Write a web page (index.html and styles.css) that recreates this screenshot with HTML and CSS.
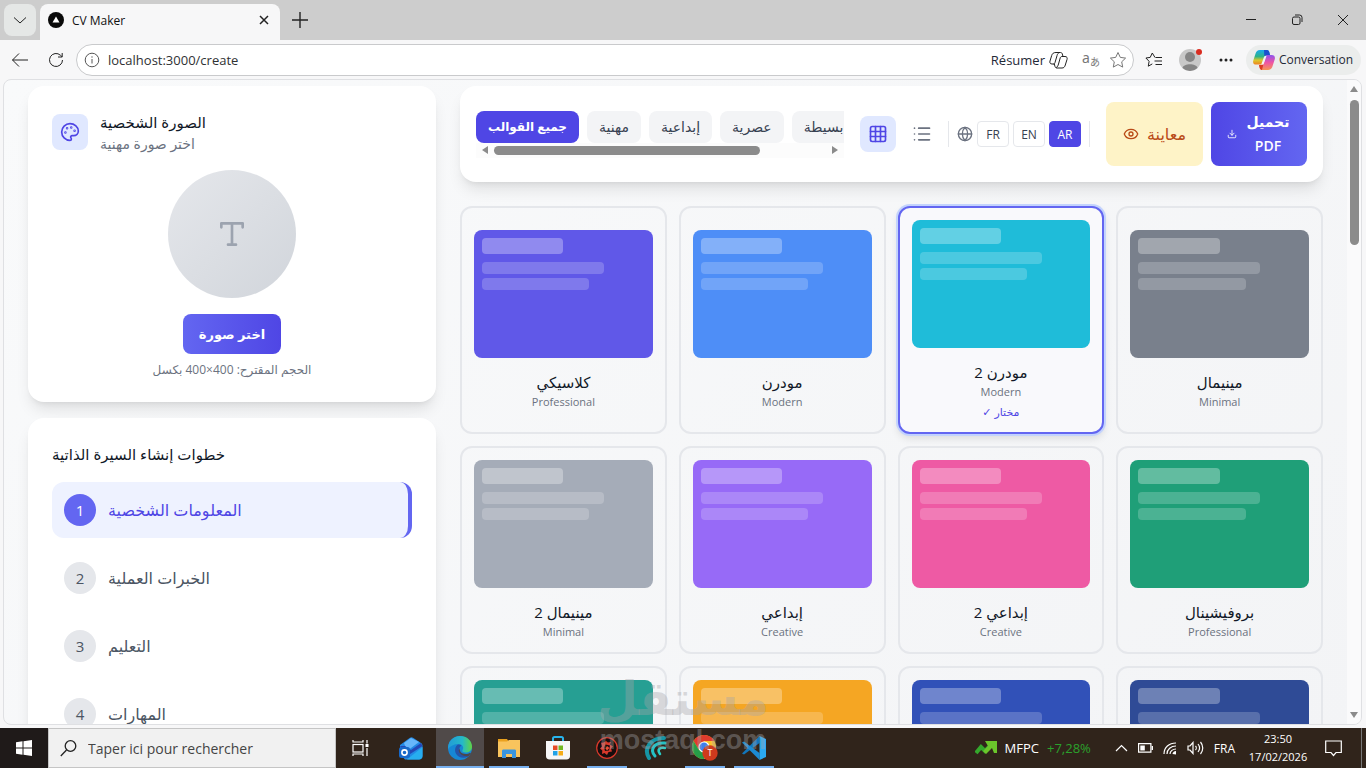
FILE: index.html
```html
<!DOCTYPE html>
<html lang="fr">
<head>
<meta charset="utf-8">
<title>CV Maker</title>
<meta name="viewport" content="width=device-width, initial-scale=1">
<link rel="stylesheet" href="styles.css">
</head>
<body>
<header class="tabstrip">
  <button class="tab-search" aria-label="Onglets"><svg width="14" height="14" viewBox="0 0 14 14"><path d="M1 4.500l6 5.500 6-5.500"/></svg></button>
  <div class="tab">
    <svg class="favicon" width="16" height="16" viewBox="0 0 16 16"><circle cx="8" cy="8" r="8"/><path d="M8 4.500l3.500 6h-7z"/></svg>
    <span class="tab-title">CV Maker</span>
    <button class="plain" aria-label="Fermer l'onglet"><svg width="10" height="10" viewBox="0 0 10 10"><path d="M1 1l8 8M9 1l-8 8" stroke-width="1.500"/></svg></button>
  </div>
  <button class="plain new-tab" aria-label="Nouvel onglet"><svg width="16" height="16" viewBox="0 0 16 16"><path d="M8 0v16M0 8h16" stroke-width="1.400"/></svg></button>
  <div class="window-controls">
    <button class="plain" aria-label="Réduire"><svg width="12" height="12" viewBox="0 0 12 12"><path d="M1 5.500h10"/></svg></button>
    <button class="plain" aria-label="Restaurer"><svg width="12" height="12" viewBox="0 0 12 12"><rect x="1.500" y="3" width="7.500" height="7.500" rx="1.500"/><path d="M4 1h4.500a2.500 2.500 0 0 1 2.500 2.500V8"/></svg></button>
    <button class="plain" aria-label="Fermer"><svg width="12" height="12" viewBox="0 0 12 12"><path d="M1 1l10 10M11 1L1 11"/></svg></button>
  </div>
</header>

<nav class="toolbar">
  <button class="plain nav-btn" aria-label="Retour"><svg width="18" height="16" viewBox="0 0 18 16"><path d="M17 8H1.500M8 1.500L1.500 8 8 14.500"/></svg></button>
  <button class="plain nav-btn" aria-label="Actualiser"><svg width="16" height="16" viewBox="0 0 16 16"><path d="M14.500 8a6.500 6.500 0 1 1-2-4.700L14 4.700M14.200 1v4H10"/></svg></button>
  <div class="address">
    <svg class="info" width="16" height="16" viewBox="0 0 16 16"><circle cx="8" cy="8" r="6.800"/><path d="M8 7v4.500M8 4.300v1.400"/></svg>
    <input class="url" type="text" value="localhost:3000/create" aria-label="Adresse">
    <button class="plain summary">Résumer
      <svg width="19" height="18" viewBox="0 0 19 18"><path d="M7 1.500h4.500c1 0 1.500.5 1.800 1.500l.7 2.500H16c2 0 2.500 1.300 2 3l-1.700 5.500c-.6 2-1.500 3-3.300 3H8c-1.200 0-1.700-.6-2-1.500L5.300 13H3c-2 0-2.500-1.500-2-3L2.700 4.500c.6-2 1.800-3 4.300-3zM10.500 1.600C9 2 8.500 3 8.100 4.400L6 11.500c-.3 1-.5 1.500-1.500 1.500M14 5.500h-1c-1 0-1.500.6-1.800 1.500L9.500 13c-.4 1.600-1 2.800-2.300 3.600"/></svg>
    </button>
    <button class="plain translate" aria-label="Traduire"><span class="tr-a">a</span><span class="tr-b">あ</span></button>
    <button class="plain star" aria-label="Favori"><svg width="18" height="18" viewBox="0 0 18 18"><path d="M9 1.500l2.300 4.900 5.300.7-3.900 3.700 1 5.300L9 13.500l-4.700 2.600 1-5.300L1.400 7.100l5.300-.7z"/></svg></button>
  </div>
  <button class="plain fav-list" aria-label="Favoris"><svg width="18" height="16" viewBox="0 0 18 16"><path d="M10 5.500L7.300 1 5.200 5.400.9 6l3.200 3.300-.8 4.900 4-2.300M10.500 5.500h6.500M9.500 9h7.500M10.500 12.500h6.500"/></svg></button>
  <button class="plain profile" aria-label="Profil"><svg width="22" height="22" viewBox="0 0 22 22"><circle cx="11" cy="11" r="11" fill="#c8c8c8"/><circle cx="11" cy="8" r="5" fill="#858585"/><path d="M3.500 19c1-5 14-5 15 0a11 11 0 0 1-15 0z" fill="#858585"/></svg><span class="dot"></span></button>
  <button class="plain more" aria-label="Plus"><svg width="14" height="4" viewBox="0 0 14 4"><circle cx="2" cy="2" r="1.500"/><circle cx="7" cy="2" r="1.500"/><circle cx="12" cy="2" r="1.500"/></svg></button>
  <button class="conversation">
    <svg width="22" height="20" viewBox="0 0 22 20">
      <defs>
        <linearGradient id="cpA" x1="0" y1="0" x2="0" y2="1"><stop offset="0" stop-color="#18a9ee"/><stop offset=".45" stop-color="#2eb388"/><stop offset=".7" stop-color="#d9c92c"/><stop offset="1" stop-color="#ef8220"/></linearGradient>
        <linearGradient id="cpB" x1="0" y1="0" x2="0" y2="1"><stop offset="0" stop-color="#8d55ee"/><stop offset=".5" stop-color="#ee54a4"/><stop offset="1" stop-color="#f79554"/></linearGradient>
      </defs>
      <path d="M7 0h7c1.500 0 2 1 2.400 2.500L17 5h-2c-2 0-2.600 1-3.100 3L10 14.500H3.500C.5 14.500-.4 13 .3 10.500L2.400 4C3.200 1.200 4.500 0 7 0z" fill="url(#cpA)"/>
      <path d="M11 0h3c1.500 0 2 1 2.400 2.500L17 5h-3c-1.300 0-2.200.6-2.600 2z" fill="#1a50ce"/>
      <path d="M15 20H9c-1.500 0-2-1-2.400-2.500L6 15h2c2 0 2.600-1 3.100-3L13 5h5.500c3 0 3.900 2 3.200 4.500L19.600 16c-.8 2.800-2.100 4-4.600 4z" fill="url(#cpB)"/>
      <path d="M6 15h2c1.400 0 2.100-.5 2.600-1.500L9 20c-1.500 0-2-1-2.400-2.500z" fill="#db3b24"/>
      <path d="M13.500 6l-3 8.500H8.200L11 7c.4-1 1-1.300 2.500-1z" fill="#f4f4f6"/>
    </svg>
    Conversation
  </button>
</nav>

<div class="viewport">
  <main class="page">
    <aside class="sidebar">
      <section class="card photo-card">
        <div class="photo-head">
          <span class="badge"><svg class="lucide" width="20" height="20" viewBox="0 0 24 24"><circle cx="13.500" cy="6.500" r=".5"/><circle cx="17.500" cy="10.500" r=".5"/><circle cx="8.500" cy="7.500" r=".5"/><circle cx="6.500" cy="12.500" r=".5"/><path d="M12 2C6.500 2 2 6.500 2 12s4.500 10 10 10c.926 0 1.648-.746 1.648-1.688 0-.437-.18-.835-.437-1.125-.29-.289-.438-.652-.438-1.125a1.640 1.640 0 0 1 1.668-1.668h1.996c3.051 0 5.555-2.503 5.555-5.554C21.965 6.012 17.461 2 12 2z"/></svg></span>
          <div>
            <h2 class="heading" lang="ar">الصورة الشخصية</h2>
            <p class="sub" lang="ar">اختر صورة مهنية</p>
          </div>
        </div>
        <div class="avatar"><svg class="lucide" width="32" height="32" viewBox="0 0 24 24"><path d="M4 7V4h16v3M9 20h6M12 4v16"/></svg></div>
        <button class="choose" lang="ar">اختر صورة</button>
        <p class="hint" lang="ar" dir="rtl">الحجم المقترح: 400×400 بكسل</p>
      </section>
      <section class="card steps-card">
        <h2 class="heading" lang="ar">خطوات إنشاء السيرة الذاتية</h2>
        <ol class="steps">
          <li><button class="step active"><span class="num">1</span><span lang="ar">المعلومات الشخصية</span></button></li>
          <li><button class="step"><span class="num">2</span><span lang="ar">الخبرات العملية</span></button></li>
          <li><button class="step"><span class="num">3</span><span lang="ar">التعليم</span></button></li>
          <li><button class="step"><span class="num">4</span><span lang="ar">المهارات</span></button></li>
        </ol>
      </section>
    </aside>

    <div class="content">
      <section class="card controls">
        <div class="filters">
          <div class="chips" lang="ar">
            <button class="chip on">جميع القوالب</button>
            <button class="chip">مهنية</button>
            <button class="chip">إبداعية</button>
            <button class="chip">عصرية</button>
            <button class="chip">بسيطة</button>
          </div>
          <div class="hscroll"><i class="arrow left"></i><div class="htrack"><div class="hthumb"></div></div><i class="arrow right"></i></div>
        </div>
        <div class="views">
          <button class="view on" aria-label="Grille"><svg class="lucide" width="20" height="20" viewBox="0 0 24 24"><rect x="3" y="3" width="18" height="18" rx="2"/><path d="M3 9h18M3 15h18M9 3v18M15 3v18"/></svg></button>
          <button class="view" aria-label="Liste"><svg class="lucide" width="20" height="20" viewBox="0 0 24 24"><path d="M8 5h13M8 12h13M8 19h13M3 5h.01M3 12h.01M3 19h.01"/></svg></button>
        </div>
        <div class="langs">
          <svg class="lucide" width="16" height="16" viewBox="0 0 24 24"><circle cx="12" cy="12" r="10"/><path d="M12 2a14.500 14.500 0 0 0 0 20 14.500 14.500 0 0 0 0-20M2 12h20"/></svg>
          <button class="lang">FR</button><button class="lang">EN</button><button class="lang on">AR</button>
        </div>
        <div class="actions">
          <button class="action preview"><svg class="lucide" width="16" height="16" viewBox="0 0 24 24"><path d="M2.060 12.350a1 1 0 0 1 0-.7 10.750 10.750 0 0 1 19.880 0 1 1 0 0 1 0 .7 10.750 10.750 0 0 1-19.880 0"/><circle cx="12" cy="12" r="3"/></svg><span lang="ar">معاينة</span></button>
          <button class="action download"><svg class="lucide" width="10" height="10" viewBox="0 0 24 24"><path d="M21 15v4a2 2 0 0 1-2 2H5a2 2 0 0 1-2-2v-4M7 10l5 5 5-5M12 15V3"/></svg><span lang="ar">تحميل PDF</span></button>
        </div>
      </section>

      <section class="templates">
        <button class="tpl"><span class="thumb indigo"><i></i><i></i><i></i></span><span class="name" lang="ar">كلاسيكي</span><span class="kind">Professional</span></button>
        <button class="tpl"><span class="thumb blue"><i></i><i></i><i></i></span><span class="name" lang="ar">مودرن</span><span class="kind">Modern</span></button>
        <button class="tpl selected"><span class="thumb cyan"><i></i><i></i><i></i></span><span class="name" dir="rtl" lang="ar">مودرن 2</span><span class="kind">Modern</span><span class="picked" lang="ar">✓ مختار</span></button>
        <button class="tpl"><span class="thumb slate"><i></i><i></i><i></i></span><span class="name" lang="ar">مينيمال</span><span class="kind">Minimal</span></button>
        <button class="tpl"><span class="thumb gray"><i></i><i></i><i></i></span><span class="name" dir="rtl" lang="ar">مينيمال 2</span><span class="kind">Minimal</span></button>
        <button class="tpl"><span class="thumb violet"><i></i><i></i><i></i></span><span class="name" lang="ar">إبداعي</span><span class="kind">Creative</span></button>
        <button class="tpl"><span class="thumb pink"><i></i><i></i><i></i></span><span class="name" dir="rtl" lang="ar">إبداعي 2</span><span class="kind">Creative</span></button>
        <button class="tpl"><span class="thumb green"><i></i><i></i><i></i></span><span class="name" lang="ar">بروفيشينال</span><span class="kind">Professional</span></button>
        <button class="tpl" aria-label="Professional"><span class="thumb teal"><i></i><i></i><i></i></span></button>
        <button class="tpl" aria-label="Creative"><span class="thumb amber"><i></i><i></i><i></i></span></button>
        <button class="tpl" aria-label="Modern"><span class="thumb royal"><i></i><i></i><i></i></span></button>
        <button class="tpl" aria-label="Minimal"><span class="thumb navy"><i></i><i></i><i></i></span></button>
      </section>
    </div>
  </main>
  <div class="vscroll"><i class="arrow up"></i><div class="vtrack"><div class="vthumb"></div></div><i class="arrow down"></i></div>
</div>

<footer class="taskbar">
  <button class="start" aria-label="Démarrer"><svg width="16" height="16" viewBox="0 0 16 16"><path d="M0 2.200L6.500 1.300v6.200H0zM7.500 1.200L16 0v7.500H7.500zM0 8.500h6.500v6.200L0 13.800zM7.500 8.500H16V16l-8.500-1.200z"/></svg></button>
  <label class="search">
    <svg width="17" height="17" viewBox="0 0 17 17"><circle cx="10.500" cy="6" r="5.300"/><path d="M6.500 10L.8 16"/></svg>
    <input type="text" placeholder="Taper ici pour rechercher" aria-label="Rechercher">
  </label>
  <div class="apps">
    <button class="app task-view" aria-label="Vue des tâches"><svg width="17" height="16" viewBox="0 0 17 16" fill="none" stroke="#fff" stroke-width="1.200"><rect x="1" y="4.500" width="10" height="7.500"/><path d="M1 0v2h10V0M1 16v-2h10v2M15 0v3.500M15 8v8"/><path d="M13.500 4h3v3h-3z" fill="#fff" stroke="none"/></svg></button>
    <button class="app" aria-label="Outlook"><svg width="24" height="23" viewBox="0 0 24 23"><path d="M1 8L11 .8c1-.7 2-.7 3 0L22 6c1 .7 1.500 1.500 1.500 3v10c0 2-1.500 3.500-3.500 3.500H6L1 17z" fill="#2289e5"/><path d="M5 6l7-5 8 4-12 9z" fill="#67b7fb"/><path d="M1 9h5l6 4 10-7 1.500 3L8 19z" fill="#2547b6"/><path d="M23.500 10v9c0 2-1.500 3.500-3.500 3.500H8z" fill="#27adf0"/><rect y="10" width="11" height="11" rx="2.500" fill="#1769ca"/><circle cx="5.500" cy="15.500" r="2.600" fill="none" stroke="#fff" stroke-width="1.600"/></svg></button>
    <button class="app current" aria-label="Edge"><svg width="24" height="24" viewBox="0 0 24 24"><defs><linearGradient id="edA" x2="1"><stop stop-color="#229bd7"/><stop offset=".6" stop-color="#25b9c8"/><stop offset="1" stop-color="#61d442"/></linearGradient></defs><circle cx="12" cy="12" r="12" fill="#1687d5"/><path d="M0 11C1 4 6 0 12 0c7 0 12 5 12 10.500 0 4-3 6-6.500 6-2.500 0-4-1-3-2.500 2-3-.5-6-4-6C6 8 2 10 0 13z" fill="url(#edA)"/><path d="M10 8.500c-3 2-3.800 6-1.800 9.500 2 3.400 7 5 12 2.500l2.200-2.500c-5 2.600-10 .5-11-3-.7-2.500.4-4.500 2-5.500-1-1-2.200-1.300-3.400-1z" fill="#2454aa"/><path d="M12 12c-1 3 1.500 6 5.500 6 2 0 3.500-.5 4.700-1.300l.8.600-2.300 2.600C16 21 11 18 10.700 14.500z" fill="#4c474b"/></svg></button>
    <button class="app open" aria-label="Explorateur"><svg width="22" height="19" viewBox="0 0 22 19"><path d="M0 0h9l2 3H0z" fill="#eaa11e"/><path d="M0 2.500h9L11 1h11v17H0z" fill="#f9c45d"/><path d="M4 19v-7c0-1 .6-1.500 1.500-1.500h11c1 0 1.500.5 1.500 1.500v7h-4v-4H8v4z" fill="#3995df"/></svg></button>
    <button class="app" aria-label="Microsoft Store"><svg width="24" height="24" viewBox="0 0 24 24"><path d="M7 6V2.500C7 1.500 7.500 1 8.500 1h7c1 0 1.500.5 1.500 1.500V6" fill="none" stroke="#28b4ec" stroke-width="2"/><path d="M0 5h24v15c0 2-1.200 3.500-3.500 3.500h-17C1.200 23.500 0 22 0 20z" fill="#f7f7f7"/><path d="M7 9.500h4.500V14H7z" fill="#e64b26"/><path d="M12.500 9.500H17V14h-4.500z" fill="#72b923"/><path d="M7 15h4.500v4.500H7z" fill="#22a3e7"/><path d="M12.500 15H17v4.500h-4.500z" fill="#f6ad18"/></svg></button>
    <button class="app open" aria-label="Studio"><svg width="22" height="22" viewBox="0 0 22 22"><circle cx="11" cy="11" r="10.300" fill="#170d0d" stroke="#d9392b" stroke-width="1.200"/><path d="M5 5.500c2 .5 3 0 5-1.500l2 1.500 3-.5-1 2.500 3 2-2 2 1 3-3.500.5-1.500 3-2.500-2L6 17l.3-3.500L4 11.500l2-2z" fill="#d9392b"/><path d="M9.500 7.500l4.500 1-1 5-4 .5-1-3.500z" fill="#170d0d"/><path d="M11 9l2.500 2-2.500 2.500-1.500-2z" fill="#e84f34"/></svg></button>
    <button class="app" aria-label="Agent"><svg width="24" height="24" viewBox="0 0 24 24" fill="none" stroke-linecap="round"><path d="M5 22C-1 12 7 2 20 2" stroke="#1695a5" stroke-width="4"/><path d="M11 20C5 13 11 6 21 7" stroke="#24c1c5" stroke-width="3"/><path d="M16 18c-3-4-1-7 5-6" stroke="#29cec8" stroke-width="2.500"/></svg></button>
    <button class="app open" aria-label="Chrome"><svg width="26" height="26" viewBox="0 0 26 26"><circle cx="12" cy="12" r="12" fill="#fbc226"/><path d="M1.600 6A12 12 0 0 1 22.400 6H12l-5 9z" fill="#df3b2d"/><path d="M1.600 6A12 12 0 0 0 12 24l5-9H7z" fill="#269d48"/><circle cx="12" cy="12" r="5.600" fill="#fff"/><circle cx="12" cy="12" r="4.400" fill="#3e80ed"/><circle cx="18" cy="18" r="7.700" fill="#ce3a1d"/><text x="18" y="21" text-anchor="middle" class="chrome-t">T</text></svg></button>
    <button class="app open" aria-label="Visual Studio Code"><svg width="24" height="24" viewBox="0 0 24 24"><path d="M17.500 0v7L2 18.500l-2-1z" fill="#1276bb"/><path d="M0 6.500l2-1L17.500 17v7z" fill="#1c8bd4"/><path d="M17.500 0L24 3v18l-6.500 3z" fill="#2baaf2"/></svg></button>
  </div>
  <div class="tray">
    <div class="stock"><svg width="22" height="14" viewBox="0 0 22 14"><path d="M1 12l5-6 4 4 7-7" fill="none" stroke="#34a82c" stroke-width="4"/><path d="M10 0h12v12h-3l-2-5-6 6-3-3 5-5z" fill="#6bc62b"/></svg><span>MFPC</span><span class="gain">+7,28%</span></div>
    <svg width="13" height="8" viewBox="0 0 13 8"><path d="M1 7l5.500-5.500L12 7"/></svg>
    <svg width="15" height="10" viewBox="0 0 15 10"><path d="M.6.600h12.300v8.600H.6zM14.400 3v4"/><path d="M2.300 2.500h4.500v5H2.300z" fill="#fff" stroke="none"/></svg>
    <svg width="14" height="13" viewBox="0 0 14 13"><path d="M1 12C1 5.500 6 1 13 1M4 12c0-4.500 4-8 9-8M7 12c0-3 3-5 6-5"/><path d="M9.500 12c0-1.500 1.500-3 3.500-3v3.500z" fill="#fff" stroke="none"/></svg>
    <svg width="17" height="14" viewBox="0 0 17 14"><path d="M1 5h2l3-3.500v11L3 9H1zM8.500 5c1 1 1 3 0 4M11 3c2 2.500 2 5.500 0 8M13.500 1c3 3.500 3 8.500 0 12"/></svg>
    <span class="lang-code">FRA</span>
    <div class="clock"><span>23:50</span><span>17/02/2026</span></div>
    <svg class="bell" width="17" height="17" viewBox="0 0 17 17"><path d="M.7 1h15.600v11.500H11l-2.500 3-2.500-3H.7z"/></svg>
    <span class="peek"></span>
  </div>
</footer>
<div class="watermark" aria-hidden="true"><span class="wm-ar" lang="ar">مستقل</span><span class="wm-en">mostaql.com</span></div>
</body>
</html>
```
FILE: styles.css
```css
* { box-sizing: border-box; }

body {
  margin: 0;
  height: 100vh;
  display: flex;
  flex-direction: column;
  overflow: hidden;
  background: #f7f7f8;
  color: #1f2937;
  font-family: "Open Sans", "Noto Sans", "DejaVu Sans", sans-serif;
  font-size: 16px;
}

button, input { font: inherit; color: inherit; }
button { padding: 0; border: 0; background: none; }
h2, p, ol { margin: 0; padding: 0; list-style: none; }
svg { flex: none; display: block; }

/* Browser window */
.tabstrip {
  flex: none;
  height: 40px;
  display: flex;
  align-items: center;
  background: #cdcdcd;
}
.plain { display: flex; align-items: center; justify-content: center; }
.plain svg, .tab-search svg { fill: none; stroke: #222; }
.tab-search {
  width: 32px;
  height: 32px;
  margin: 0 4px;
  display: flex;
  align-items: center;
  justify-content: center;
  border-radius: 8px;
  background: #e5e7e6;
}
.tab {
  align-self: flex-end;
  width: 240px;
  height: 36px;
  padding: 0 11px 4px 8px;
  display: flex;
  align-items: center;
  gap: 8px;
  border-radius: 8px 8px 0 0;
  background: #f7f7f8;
}
.tab-title { flex: 1; font-size: 12px; color: #111; }
.favicon circle { fill: #0a0a0a; }
.favicon path { fill: #fff; }
.new-tab { width: 40px; height: 32px; }
.window-controls { margin-left: auto; display: flex; }
.window-controls .plain { width: 46px; height: 40px; }

.toolbar {
  flex: none;
  height: 39px;
  display: flex;
  align-items: center;
  padding-right: 5px;
}
.nav-btn { width: 36px; height: 32px; margin-left: 2px; }
.nav-btn + .nav-btn { margin-left: 0; }
.address {
  flex: 1;
  height: 32px;
  margin-left: 2px;
  padding: 0 6px 0 7px;
  display: flex;
  align-items: center;
  gap: 8px;
  border: 1px solid #c9cacc;
  border-radius: 16px;
  background: #fff;
}
.info { fill: none; stroke: #555; }
.url {
  flex: 1;
  min-width: 0;
  border: 0;
  padding: 0;
  background: none;
  outline: 0;
  font-size: 13px;
  color: #2f3133;
}
.summary { gap: 4px; font-size: 13px; }
.translate { width: 20px; margin-left: 5px; color: #777; font-family: "Noto Sans", "Noto Sans CJK JP", sans-serif; }
.tr-a { font-size: 14px; line-height: 20px; padding-bottom: 4px; }
.tr-b { font-size: 10px; line-height: 20px; padding-top: 4px; }
.star svg { stroke: #777; }
.fav-list { width: 40px; height: 32px; }
.profile { position: relative; width: 32px; height: 32px; }
.profile svg { stroke: none; }
.dot {
  position: absolute;
  top: 5px;
  right: 4px;
  width: 6px;
  height: 6px;
  border-radius: 50%;
  background: #d92c20;
}
.more { width: 40px; height: 32px; }
.more svg { fill: #222; stroke: none; }
.conversation {
  height: 30px;
  padding: 0 8px 0 7px;
  display: flex;
  align-items: center;
  gap: 4px;
  border-radius: 15px;
  background: #ebedec;
  font-size: 12px;
}

.viewport {
  flex: 1;
  min-height: 0;
  margin: 0 4px 3px 3px;
  display: flex;
  overflow: hidden;
  border: 1px solid #dfe0e3;
  border-radius: 8px;
  background: linear-gradient(135deg, #f9fafb, #f3f4f6);
}

/* Application */
.page {
  flex: 1;
  min-width: 0;
  padding: 6px 24px 0;
  display: grid;
  grid-template-columns: 408fr 863fr;
  align-items: start;
  gap: 24px;
}
.card {
  border-radius: 16px;
  background: #fff;
  box-shadow: 0 10px 15px -3px rgba(0, 0, 0, .1), 0 4px 6px -4px rgba(0, 0, 0, .1);
}
.lucide {
  fill: none;
  stroke: currentColor;
  stroke-width: 2;
  stroke-linecap: round;
  stroke-linejoin: round;
}
.sidebar { display: flex; flex-direction: column; gap: 16px; }
.photo-card {
  padding: 24px;
  display: flex;
  flex-direction: column;
  align-items: center;
}
.photo-head { align-self: stretch; display: flex; align-items: center; gap: 12px; margin-bottom: 16px; }
.badge {
  padding: 8px;
  border-radius: 8px;
  background: #e0e8ff;
  color: #4f46e5;
}
.heading { font-size: 15px; line-height: 24px; font-weight: 500; color: #111827; }
.sub { font-size: 14px; line-height: 20px; color: #6b7280; }
.avatar {
  width: 128px;
  height: 128px;
  display: flex;
  align-items: center;
  justify-content: center;
  border-radius: 50%;
  background: linear-gradient(135deg, #e5e7eb, #d1d5db);
  color: #9ca3af;
}
.choose {
  height: 40px;
  margin: 16px 0 8px;
  padding: 0 16px;
  border-radius: 8px;
  background: linear-gradient(90deg, #6366f1, #4f46e5);
  color: #fff;
  font-weight: 600;
  font-size: 13px;
}
.hint { font-size: 12px; line-height: 16px; color: #6b7280; }
.steps-card { padding: 24px; }
.steps { margin-top: 16px; display: flex; flex-direction: column; gap: 12px; }
.step {
  width: 100%;
  height: 56px;
  padding: 0 12px;
  display: flex;
  align-items: center;
  gap: 12px;
  border-radius: 12px;
  color: #4b5563;
}
.num {
  width: 32px;
  height: 32px;
  display: flex;
  align-items: center;
  justify-content: center;
  border-radius: 50%;
  background: #e5e7eb;
  font-size: 15px;
}
.step.active { background: #eef2ff; color: #4f46e5; border-right: 4px solid #6366f1; }
.step.active .num { background: #6366f1; color: #fff; }

.content { min-width: 0; display: flex; flex-direction: column; gap: 24px; }
.controls {
  height: 96px;
  padding: 16px;
  display: flex;
  align-items: center;
}
.filters { flex: 1; min-width: 0; }
.chips { display: flex; gap: 8px; overflow: hidden; }
.chip {
  flex: none;
  height: 32px;
  padding: 0 12px;
  border-radius: 8px;
  background: #f3f4f6;
  color: #374151;
  font-size: 14px;
  white-space: nowrap;
}
.chip.on { background: #4f46e5; color: #fff; font-weight: 600; font-size: 12px; }
.hscroll {
  height: 15px;
  padding: 0 6px;
  display: flex;
  align-items: center;
  gap: 6px;
  background: #fcfcfc;
}
.htrack { flex: 1; }
.hthumb { width: 80%; height: 9px; border-radius: 5px; background: #8b8b8b; }
.arrow { width: 0; height: 0; border: 4px solid transparent; }
.arrow.left { border-left-width: 0; border-right: 6px solid #8b8b8b; }
.arrow.right { border-right-width: 0; border-left: 6px solid #8b8b8b; }
.arrow.up { border-top-width: 0; border-bottom: 6px solid #8b8b8b; }
.arrow.down { border-bottom-width: 0; border-top: 6px solid #8b8b8b; }
.views { display: flex; gap: 8px; margin: 0 8px 0 16px; }
.view { padding: 8px; border-radius: 8px; color: #6b7280; }
.view.on { background: #e0e8ff; color: #4f46e5; }
.langs {
  height: 26px;
  padding: 0 8px;
  display: flex;
  align-items: center;
  gap: 4px;
  border: solid #e5e7eb;
  border-width: 0 1px;
  color: #6b7280;
}
.lang {
  width: 32px;
  height: 26px;
  border: 1px solid #e5e7eb;
  border-radius: 4px;
  color: #374151;
  font-size: 12px;
}
.lang.on { background: #4f46e5; border-color: #4f46e5; color: #fff; }
.actions { display: flex; gap: 8px; margin-left: 16px; }
.action {
  width: 97px;
  height: 64px;
  display: flex;
  align-items: center;
  justify-content: center;
  gap: 8px;
  border-radius: 8px;
  line-height: 24px;
}
.preview { background: #fef3c7; color: #b94a16; }
.download {
  width: 96px;
  padding: 0 16px;
  background: linear-gradient(90deg, #4f46e5, #6366f1);
  color: #fff;
  font-size: 14px;
  font-weight: 600;
}

.templates { display: grid; grid-template-columns: repeat(4, 1fr); gap: 12px; }
.tpl {
  min-height: 208px;
  padding: 12px;
  display: flex;
  flex-direction: column;
  align-items: center;
  justify-content: center;
  border: 2px solid #e5e7eb;
  border-radius: 12px;
}
.tpl.selected {
  border-color: #6366f1;
  background: #f9f9fc;
  box-shadow: 0 0 0 2px #c3d3fd, 0 4px 8px rgba(0, 0, 0, .12);
}
.tpl:nth-child(n + 9) { justify-content: flex-start; }
.thumb {
  align-self: stretch;
  height: 128px;
  padding: 8px;
  display: block;
  border-radius: 8px;
}
.thumb i { display: block; width: 75%; height: 12px; border-radius: 4px; background: rgba(255, 255, 255, .2); }
.thumb i:first-child { width: 50%; height: 16px; margin-bottom: 8px; background: rgba(255, 255, 255, .3); }
.thumb i:last-child { width: 66%; margin-top: 4px; }
.indigo { background: #6058e8; }
.blue { background: #4e8ef7; }
.cyan { background: #1fbcd9; }
.slate { background: #79808c; }
.gray { background: #a5acb8; }
.violet { background: #976af7; }
.pink { background: #ee5aa4; }
.green { background: #1f9f78; }
.teal { background: #269f93; }
.amber { background: #f5a623; }
.royal { background: #3151b8; }
.navy { background: #2f4b96; }
.name { margin-top: 12px; font-size: 15px; line-height: 24px; font-weight: 500; color: #111827; }
.kind { font-size: 11px; line-height: 16px; color: #6b7280; }
.picked { margin-top: 4px; font-size: 11px; line-height: 16px; color: #4f46e5; }

.vscroll {
  flex: none;
  width: 14px;
  padding: 6px 0;
  display: flex;
  flex-direction: column;
  align-items: center;
  gap: 8px;
  background: #fafafb;
}
.vtrack { flex: 1; }
.vthumb { width: 9px; height: 24%; border-radius: 5px; background: #8b8b8b; }

/* Desktop taskbar */
.taskbar {
  flex: none;
  height: 40px;
  display: flex;
  background: #30241b;
  color: #fff;
}
.start { width: 48px; display: flex; align-items: center; justify-content: center; background: #1f1a19; }
.start svg { fill: #fff; }
.search {
  width: 288px;
  padding: 0 11px;
  display: flex;
  align-items: center;
  gap: 11px;
  border: 1px solid #c5c5c5;
  background: #f1f1f1;
}
.search svg { fill: none; stroke: #222; stroke-width: 1.300; }
.search input { flex: 1; min-width: 0; border: 0; padding: 0; background: none; outline: 0; font-size: 14px; color: #333; }
.search input::placeholder { color: #444; opacity: 1; }
.apps { display: flex; gap: 1px; }
.app { width: 48px; display: flex; align-items: center; justify-content: center; }
.task-view { margin-right: 2px; }
.current { background: #504a49; box-shadow: inset 0 -2px #77b0ef; }
.open { background: linear-gradient(#77b0ef, #77b0ef) center bottom / 40px 2px no-repeat; }
.chrome-t { font-size: 9px; fill: #fff; }
.tray { margin-left: auto; display: flex; align-items: center; gap: 10px; font-size: 12px; }
.tray > svg { fill: none; stroke: #fff; stroke-width: 1.200; }
.stock { display: flex; align-items: center; gap: 8px; margin-right: 14px; font-size: 13px; }
.gain { color: #2ba12c; }
.clock { width: 66px; display: flex; flex-direction: column; align-items: center; font-size: 11px; line-height: 18px; }
.bell { margin: 0 9px 0 4px; }
.peek { width: 5px; height: 40px; border-left: 1px solid #777; }

/* Watermark laid over the whole desktop */
.watermark {
  position: absolute;
  left: 600px;
  top: 668px;
  display: flex;
  flex-direction: column;
  align-items: center;
  width: 166px;
  color: rgba(165, 165, 170, .4);
  font-weight: 700;
  pointer-events: none;
}
.wm-ar { font-size: 47px; line-height: 58px; }
.wm-en { font-family: "Liberation Sans", sans-serif; font-size: 27px; line-height: 28px; }
```
